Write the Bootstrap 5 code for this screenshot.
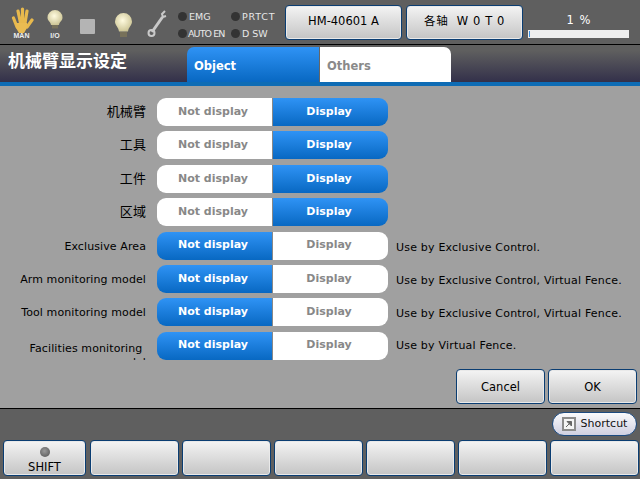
<!DOCTYPE html>
<html lang="en"><head><meta charset="utf-8"><title>Arm display setting</title>
<link href="https://cdn.jsdelivr.net/npm/bootstrap@5.3.0/dist/css/bootstrap.min.css" rel="stylesheet">
<style>
html,body{margin:0;height:479px;overflow:hidden;background:#5f5f5f}
body{font-family:"DejaVu Sans","Noto Sans CJK SC",sans-serif;font-size:11px;color:#000}
.hmi{width:640px;height:479px}
.topzone{height:45px;flex:none;background:#5f5f5f;border-bottom:1px solid #000;padding-left:10px}
.slot{flex:none;display:block}
.ic-hand{margin-right:10px}
.ic-io{margin-right:14px}
.ic-sq{margin-right:19px;margin-top:8px}
.ic-bulb{margin-right:14px;margin-top:6px}
.ic-wrench{margin-top:4px}
.ledgrid{display:grid;grid-template-columns:53px auto;row-gap:3px;margin-left:11px;margin-top:6px;width:102px;color:#e8e8e8;font-size:9.5px;line-height:14px}
.ledcell{display:flex;align-items:center;gap:2px;white-space:nowrap}
.ledcell i{width:9px;height:9px;border-radius:50%;background:#333;flex:none}
.tightlbl{letter-spacing:-.9px;margin-left:-1px}
.widelbl{letter-spacing:.8px}
.gbtn{background:linear-gradient(#f4f4f4,#c4c4c4);border:1px solid #0a3d72;border-radius:4px;box-shadow:inset 0 0 0 1px #e9e9e9;color:#000;padding:0;display:flex;align-items:center;justify-content:center;font-size:11.5px;flex:none}
.hdbtn{width:117px;height:35px;margin-right:4px}
.hdbtn.first{margin-left:5px}
.cjkgap{letter-spacing:.6px}
.gaugebox{width:101px;margin-left:1px;color:#fff;text-align:center;font-size:11.5px;line-height:14px;padding-top:7px;align-self:flex-start;margin-top:6px;word-spacing:2px}
.gaugebox .track{height:8px;background:#efefef;margin-top:3px;position:relative;display:flex;align-items:center}
.gaugefill{display:block;height:6px;margin-left:1px;background:#3a8fe0;width:1px}
.titlezone{height:37px;flex:none;background:linear-gradient(#5f5f5f 15%,#33304a);padding-top:2px}
.titletext{width:187px;padding:3px 0 0 8px;font-size:17px;line-height:22px;font-weight:700;color:#fff}
.tabb{width:132px;height:35px;display:flex;align-items:center;padding:4px 0 0 7px;font-weight:700;font-size:11.5px}
.tabb.on{background:linear-gradient(#2f93f5,#0868c2);color:#fff;border-top-left-radius:7px}
.tabb.off{background:#fff;color:#8a8a8a;border-top-right-radius:7px;border-left:1px solid #666}
.blueline{height:4px;flex:none;background:#0e6cb5}
.workzone{height:323px;flex:none;background:#a0a0a0;padding-top:12px;border-bottom:1px solid #000}
.setrow{height:33.4px}
.rowlabel{width:146px;flex:none;text-align:right;font-size:11px;letter-spacing:.1px;line-height:14px;margin-right:11px;height:28px;padding-top:8px;overflow:hidden;white-space:nowrap}
.rowlabel.cjk{font-size:13px;line-height:20px;padding-top:4px}
.rowlabel.twoline{height:28px;padding-top:10px}
.pill{width:231px;height:28px;flex:none;display:flex;border-radius:9px;overflow:hidden;font-weight:700;font-size:11px}
.pill span{display:flex;align-items:center;justify-content:center;padding-right:3px}
.pill span:first-child{width:115px}
.pill span:last-child{width:116px;border-left:1px solid #888}
.sel{background:linear-gradient(#2f93f5,#0868c2);color:#fff}
.unsel{background:#fff;color:#888}
.rownote{margin-left:8px;font-size:11px;letter-spacing:.2px;line-height:28px;padding-top:2px;white-space:nowrap}
.rownote.upnote{padding-top:0}
.dlgbtns{margin-top:4px;padding-right:3px;gap:3px}
.dlgbtn{width:89px;height:35px;padding-top:1px}
.lowzone{height:70px;flex:none;background:#5f5f5f;padding:3px 3px 0}
.shortcut{width:85px;height:24px;margin-left:auto;border-radius:12px;background:linear-gradient(#fafafc,#cfcfe0);border:1px solid #1c4a80;display:flex;align-items:center;justify-content:center;gap:5px;font-size:11px;color:#111}
.fkeys{margin-top:4px;gap:3px;height:36px}
.fkey{width:89px;height:36px;flex-direction:column;line-height:12px}
.fkey.one{width:83px;margin-right:1px;padding-top:4px}
.fled{width:10px;height:10px;border-radius:50%;background:radial-gradient(circle at 45% 40%,#9a9a9a,#4f4f4f);margin-bottom:4px}
</style></head><body>
<div class="hmi d-flex flex-column">
 <div class="topzone d-flex align-items-center">
  <svg class="slot ic-hand" width="24" height="34" viewBox="0 0 24 34"><g stroke="#e8b94d" stroke-width="3.2" stroke-linecap="round" fill="none"><path d="M3.500 13l3.500 9M8 6l2.500 12M12.500 4v14M17 6l-2 12M22 15l-5 7"/></g><path d="M6 18h11v5l-3 5H9l-3-5z" fill="#eabc52"/><text x="11.500" y="33" text-anchor="middle" font-size="7" font-weight="700" fill="#eee" font-family="Liberation Sans">MAN</text></svg>
  <svg class="slot ic-io" width="22" height="34" viewBox="0 0 22 34"><defs><radialGradient id="bb" cx=".45" cy=".4" r=".65"><stop offset="0" stop-color="#fffbe0"/><stop offset="1" stop-color="#c9c190"/></radialGradient></defs><path d="M11 5a7.500 7.500 0 0 1 7.500 7.500c0 3.500-3 4-3.500 7.500h-8c-.5-3.500-3.500-4-3.500-7.500A7.500 7.500 0 0 1 11 5z" fill="url(#bb)"/><rect x="8" y="20" width="6" height="3.500" fill="#77715a"/><text x="11" y="33" text-anchor="middle" font-size="7" font-weight="700" fill="#eee" font-family="Liberation Sans">I/O</text></svg>
  <svg class="slot ic-sq" width="15" height="15" viewBox="0 0 15 15"><rect width="15" height="15" rx="1" fill="#b4b4b4"/></svg>
  <svg class="slot ic-bulb" width="19" height="26" viewBox="0 0 19 26"><path d="M9.500 1a8.500 8.500 0 0 1 8.500 8.500c0 4-3.500 5.500-4 10h-9c-.5-4.500-4-6-4-10A8.500 8.500 0 0 1 9.500 1z" fill="url(#bb)"/><rect x="6" y="20" width="7" height="5" fill="#77715a"/></svg>
  <svg class="slot ic-wrench" width="20" height="28" viewBox="0 0 20 28"><path d="M15.500 7L5 22" stroke="#c9c9c9" stroke-width="3"/><path d="M18 1l-3 3 1 3 3-1" stroke="#c9c9c9" stroke-width="2" fill="none"/><circle cx="4.500" cy="23" r="3" fill="none" stroke="#c9c9c9" stroke-width="2"/></svg>
  <div class="ledgrid">
   <div class="ledcell"><i></i>EMG</div><div class="ledcell"><i></i><span class="widelbl">PRTCT</span></div>
   <div class="ledcell"><i></i><span class="tightlbl">AUTO EN</span></div><div class="ledcell"><i></i>D SW</div>
  </div>
  <div class="gbtn hdbtn first">HM-40601 A</div>
  <div class="gbtn hdbtn cjkgap">各轴&nbsp;&nbsp;W 0 T 0</div>
  <div class="gaugebox">1 %<div class="track"><span class="gaugefill"></span></div></div>
 </div>
 <div class="titlezone d-flex">
  <div class="titletext">机械臂显示设定</div>
  <div class="tabb on">Object</div><div class="tabb off">Others</div>
 </div>
 <div class="blueline"></div>
 <div class="workzone">
  <div class="setrow d-flex align-items-start"><div class="rowlabel cjk">机械臂</div><div class="pill"><span class="unsel">Not display</span><span class="sel">Display</span></div></div>
  <div class="setrow d-flex align-items-start"><div class="rowlabel cjk">工具</div><div class="pill"><span class="unsel">Not display</span><span class="sel">Display</span></div></div>
  <div class="setrow d-flex align-items-start"><div class="rowlabel cjk">工件</div><div class="pill"><span class="unsel">Not display</span><span class="sel">Display</span></div></div>
  <div class="setrow d-flex align-items-start"><div class="rowlabel cjk">区域</div><div class="pill"><span class="unsel">Not display</span><span class="sel">Display</span></div></div>
  <div class="setrow d-flex align-items-start"><div class="rowlabel">Exclusive Area</div><div class="pill"><span class="sel">Not display</span><span class="unsel">Display</span></div><div class="rownote">Use by Exclusive Control.</div></div>
  <div class="setrow d-flex align-items-start"><div class="rowlabel">Arm monitoring model</div><div class="pill"><span class="sel">Not display</span><span class="unsel">Display</span></div><div class="rownote">Use by Exclusive Control, Virtual Fence.</div></div>
  <div class="setrow d-flex align-items-start"><div class="rowlabel">Tool monitoring model</div><div class="pill"><span class="sel">Not display</span><span class="unsel">Display</span></div><div class="rownote">Use by Exclusive Control, Virtual Fence.</div></div>
  <div class="setrow d-flex align-items-start"><div class="rowlabel twoline">Facilities monitoring&nbsp;<br>model</div><div class="pill"><span class="sel">Not display</span><span class="unsel">Display</span></div><div class="rownote upnote">Use by Virtual Fence.</div></div>
  <div class="dlgbtns d-flex justify-content-end"><div class="gbtn dlgbtn">Cancel</div><div class="gbtn dlgbtn">OK</div></div>
 </div>
 <div class="lowzone">
  <div class="shortcut"><svg width="14" height="14" viewBox="0 0 14 14"><rect width="14" height="14" fill="#8c8c8c"/><rect x="2" y="2" width="10" height="10" fill="#f4f4f4"/><path d="M4 10l4-4M5 4.500h4.500V9z" stroke="#666" fill="#666"/></svg>Shortcut</div>
  <div class="fkeys d-flex">
   <div class="gbtn fkey one"><span class="fled"></span>SHIFT</div>
   <div class="gbtn fkey"></div><div class="gbtn fkey"></div><div class="gbtn fkey"></div><div class="gbtn fkey"></div><div class="gbtn fkey"></div><div class="gbtn fkey"></div>
  </div>
 </div>
</div>
<script src="https://cdn.jsdelivr.net/npm/bootstrap@5.3.0/dist/js/bootstrap.bundle.min.js"></script>
</body></html>
